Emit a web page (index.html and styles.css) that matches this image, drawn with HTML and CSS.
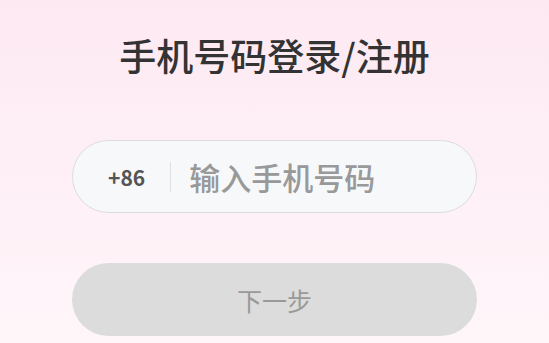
FILE: index.html
```html
<!DOCTYPE html>
<html lang="zh-CN">
<head>
    <meta charset="UTF-8">
    <meta name="viewport" content="width=device-width, initial-scale=1.0">
    <title>手机号码登录/注册</title>
    <link rel="stylesheet" href="styles.css">
</head>
<body>
    <div class="login-page">
        <h1 class="login-title">手机号码登录/注册</h1>

        <!-- phone input -->
        <div class="phone-field">
            <span class="area-code">+86</span>
            <span class="field-divider"></span>
            <input class="phone-input" type="tel" placeholder="输入手机号码">
        </div>

        <button class="next-button" disabled>下一步</button>
    </div>
</body>
</html>
```

FILE: styles.css
```css
:root {
    --bg-top: #fde9f2;
    --bg-bottom: #fff6fa;
    --title-color: #333333;
    --field-bg: #f7f8fa;
    --field-border: #dcdcdc;
    --muted-text: #999999;
    --code-text: #555555;
    --button-bg: #dcdcdc;
}

* { box-sizing: border-box; margin: 0; padding: 0; }

html, body { height: 100%; }

body {
    font-family: "Noto Sans CJK SC", "Noto Sans", sans-serif;
    background: linear-gradient(180deg, var(--bg-top) 0%, var(--bg-bottom) 100%);
    overflow: hidden;
}

.login-page {
    display: flex;
    flex-direction: column;
    padding: 25px 72px 0;
}

.login-title {
    font-size: 37px;
    font-weight: 500;
    line-height: 60px;
    text-align: center;
    color: var(--title-color);
    margin-bottom: 55px;
}

.phone-field {
    display: flex;
    align-items: center;
    height: 73px;
    background-color: var(--field-bg);
    border: 1.5px solid var(--field-border);
    border-radius: 37px;
    padding-left: 35px;
}

.area-code {
    font-size: 21px;
    font-weight: 700;
    color: var(--code-text);
}

.field-divider {
    width: 1px;
    height: 30px;
    background-color: #e0e0e0;
    margin: 0 18px 0 25px;
}

.phone-input {
    flex: 1;
    min-width: 0;
    border: none;
    outline: none;
    background: transparent;
    font-family: inherit;
    font-size: 31px;
    font-weight: 500;
    color: var(--title-color);
}

.phone-input::placeholder { color: var(--muted-text); }

.next-button {
    margin-top: 50px;
    height: 73px;
    border: none;
    border-radius: 37px;
    background-color: var(--button-bg);
    color: var(--muted-text);
    font-family: inherit;
    font-size: 25px;
}
```
